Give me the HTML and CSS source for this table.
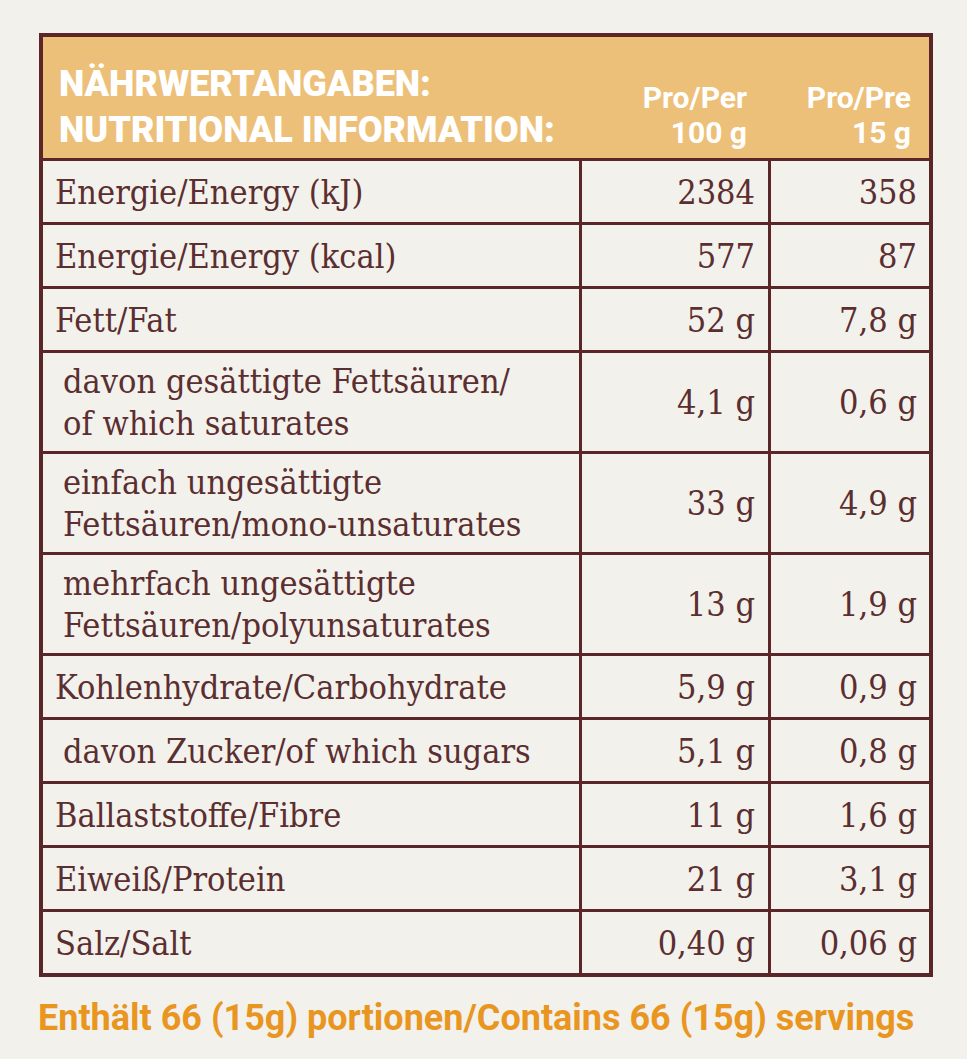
FILE: index.html
```
<!DOCTYPE html>
<html lang="de">
<head>
<meta charset="utf-8">
<title>Nährwertangaben</title>
<link rel="stylesheet" href="styles.css">
</head>
<body>
<main class="page">
  <table class="nutri">
    <colgroup>
      <col class="c-label">
      <col class="c-100">
      <col class="c-15">
    </colgroup>
    <thead>
      <tr>
        <th class="h-title">NÄHRWERTANGABEN:<br>NUTRITIONAL INFORMATION:</th>
        <th class="h-col h-col2">Pro/Per<br>100 g</th>
        <th class="h-col h-col3">Pro/Pre<br>15 g</th>
      </tr>
    </thead>
    <tbody>
      <tr><td class="lbl">Energie/Energy (kJ)</td><td class="v2">2384</td><td class="v3">358</td></tr>
      <tr><td class="lbl">Energie/Energy (kcal)</td><td class="v2">577</td><td class="v3">87</td></tr>
      <tr><td class="lbl">Fett/Fat</td><td class="v2">52 g</td><td class="v3">7,8 g</td></tr>
      <tr class="dbl"><td class="lbl sub">davon gesättigte Fettsäuren/<br>of which saturates</td><td class="v2">4,1 g</td><td class="v3">0,6 g</td></tr>
      <tr class="dbl"><td class="lbl sub">einfach ungesättigte<br>Fettsäuren/mono-unsaturates</td><td class="v2">33 g</td><td class="v3">4,9 g</td></tr>
      <tr class="dbl"><td class="lbl sub">mehrfach ungesättigte<br>Fettsäuren/polyunsaturates</td><td class="v2">13 g</td><td class="v3">1,9 g</td></tr>
      <tr><td class="lbl">Kohlenhydrate/Carbohydrate</td><td class="v2">5,9 g</td><td class="v3">0,9 g</td></tr>
      <tr><td class="lbl sub">davon Zucker/of which sugars</td><td class="v2">5,1 g</td><td class="v3">0,8 g</td></tr>
      <tr><td class="lbl">Ballaststoffe/Fibre</td><td class="v2">11 g</td><td class="v3">1,6 g</td></tr>
      <tr><td class="lbl">Eiweiß/Protein</td><td class="v2">21 g</td><td class="v3">3,1 g</td></tr>
      <tr class="last"><td class="lbl">Salz/Salt</td><td class="v2">0,40 g</td><td class="v3">0,06 g</td></tr>
    </tbody>
  </table>
  <p class="servings">Enthält 66 (15g) portionen/Contains 66 (15g) servings</p>
</main>
</body>
</html>
```
FILE: styles.css
```
html, body {
  margin: 0;
  padding: 0;
  background: #f3f1ec;
}

.page {
  padding: 33px 0 0 39px;
}

.nutri {
  width: 894px;
  table-layout: fixed;
  border-collapse: separate;
  border-spacing: 0;
  border: 4px solid #5a2628;
  background: #f3f1ec;
  color: #5b2e30;
  font-family: "DejaVu Serif Condensed", "DejaVu Serif", serif;
  font-size: 34px;
}

.c-label { width: 536px; }
.c-100 { width: 189px; }
.c-15 { width: 161px; }

thead th {
  background: #edc07a;
  color: #ffffff;
  border-bottom: 3px solid #5a2628;
  vertical-align: top;
  font-family: Roboto, "DejaVu Sans", sans-serif;
  height: 124px;
  padding: 0;
  box-sizing: border-box;
}

.h-title {
  text-align: left;
  font-weight: 900;
  font-size: 36px;
  line-height: 46px;
  padding: 24px 0 0 16px;
  white-space: nowrap;
}

.h-col {
  text-align: right;
  font-weight: 700;
  font-size: 30px;
  line-height: 35px;
  padding-top: 43px;
}

.h-col2 { padding-right: 21px; }
.h-col3 { padding-right: 18px; }

tbody td {
  height: 61px;
  padding: 0;
  border-bottom: 3px solid #5a2628;
  vertical-align: middle;
  white-space: nowrap;
  line-height: 42px;
}

tbody tr.dbl td { height: 98px; }
tbody tr.last td { border-bottom: none; }

.lbl {
  padding-left: 12px;
  text-align: left;
}

.lbl.sub { padding-left: 20px; }

.v2, .v3 {
  text-align: right;
  border-left: 3px solid #5a2628;
}

.v2 { padding-right: 13px; }
.v3 { padding-right: 12px; }

.servings {
  margin: 20px 0 0 -1px;
  font-family: Roboto, "DejaVu Sans", sans-serif;
  font-weight: 700;
  font-size: 36px;
  line-height: 42px;
  color: #e8961f;
  white-space: nowrap;
}
```
